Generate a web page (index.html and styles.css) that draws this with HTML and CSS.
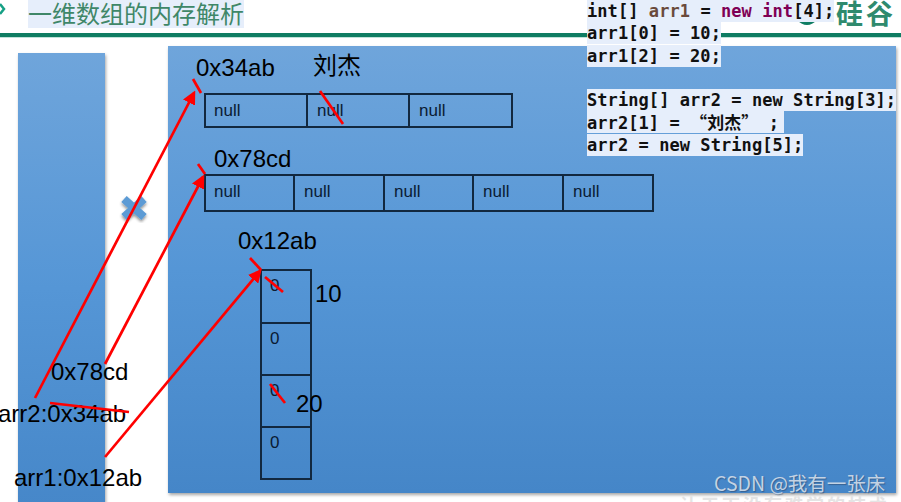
FILE: index.html
```html
<!DOCTYPE html>
<html lang="zh">
<head>
<meta charset="utf-8">
<title>一维数组的内存解析</title>
<link rel="stylesheet" href="styles.css">
</head>
<body>
<main class="slide">
  <header class="head">
    <svg class="bullet" width="8" height="16" viewBox="0 0 8 16"><path d="M0 3 L4 8 L0 13" fill="none" stroke="#16a085" stroke-width="2.5"/></svg>
    <h1 class="title">一维数组的内存解析</h1>
  </header>
  <div class="rule"></div>
  <div class="logo">硅谷</div>
  <svg class="smile" width="24" height="10" viewBox="0 0 24 10"><path d="M1 1 Q12 13 23 1 Q12 7 1 1Z" fill="#0f7d63"/></svg>

  <pre class="code"><span class="ln"><b>int[] <i class="v">arr1</i> = <i class="k">new</i> <i class="k">int</i>[4];</b></span>
<span class="ln">arr1[0] = 10;</span>
<span class="ln">arr1[2] = 20;</span>
<span class="ln blank"> </span>
<span class="ln">String[] arr2 = new String[3];</span>
<span class="ln pad">arr2[1] = <em class="zh">“刘杰”</em> ;</span>
<span class="ln">arr2 = new String[5];</span></pre>

  <div class="stack"></div>
  <div class="heap"></div>

  <div class="label lg at-a">0x34ab</div>
  <div class="label xl at-b">刘杰</div>
  <div class="arr arr3"><span>null</span><span>null</span><span>null</span></div>

  <div class="label lg at-c">0x78cd</div>
  <div class="arr arr5"><span>null</span><span>null</span><span>null</span><span>null</span><span>null</span></div>

  <div class="label lg at-d">0x12ab</div>
  <div class="col"><span>0</span><span>0</span><span>0</span><span>0</span></div>
  <div class="label lg at-e">10</div>
  <div class="label lg at-f">20</div>

  <div class="label lg at-g">0x78cd</div>
  <div class="label lg at-h">arr2:0x34ab</div>
  <div class="label lg at-i">arr1:0x12ab</div>

  <svg class="marks" width="901" height="502" viewBox="0 0 901 502">
    <defs>
      <marker id="tip" markerWidth="5" markerHeight="5" refX="4" refY="2.500" orient="auto"><path d="M0 0 L5 2.500 L0 5Z" fill="#f00"/></marker>
      <filter id="sh" x="-30%" y="-30%" width="160%" height="160%"><feDropShadow dx="0" dy="2" stdDeviation="1.500" flood-opacity=".45"/></filter>
    </defs>
    <g class="cross" filter="url(#sh)">
      <line x1="124" y1="199" x2="144" y2="217"/>
      <line x1="144" y1="199" x2="124" y2="217"/>
    </g>
    <g class="red">
      <line class="arrow" x1="35" y1="398" x2="194" y2="93" marker-end="url(#tip)"/>
      <line class="arrow" x1="105" y1="364" x2="203" y2="177" marker-end="url(#tip)"/>
      <line class="arrow" x1="105" y1="457" x2="260" y2="271" marker-end="url(#tip)"/>
      <line x1="193" y1="79" x2="201" y2="93"/>
      <line x1="320" y1="91" x2="343" y2="124"/>
      <line x1="198" y1="164" x2="205" y2="174"/>
      <line x1="250" y1="258" x2="261" y2="270"/>
      <line x1="265" y1="277" x2="283" y2="292"/>
      <line x1="270" y1="384" x2="285" y2="403"/>
      <line x1="50" y1="403" x2="129" y2="412"/>
    </g>
  </svg>

  <div class="wm">CSDN @我有一张床</div>
  <div class="under">让天下没有难学的技术</div>
</main>
</body>
</html>
```
FILE: styles.css
```css
html, body { margin: 0; padding: 0; background: #fff; }
body { width: 901px; height: 502px; overflow: hidden; }
.slide {
  position: relative;
  width: 901px;
  height: 502px;
  overflow: hidden;
  font-family: "Liberation Sans", "Noto Sans CJK SC", sans-serif;
  color: #000;
}
.head { display: flex; align-items: flex-start; height: 33px; }
.bullet { margin-top: 1px; flex: none; }
.title {
  margin: 0 0 0 20px;
  width: 216px;
  height: 28px;
  background: #e6eefb;
  color: #3f8768;
  font: 400 24px/26px "Noto Sans CJK SC", sans-serif;
  white-space: nowrap;
}
.rule {
  height: 4px;
  background: #0f7d63;
  border-bottom: 1px solid #bfe3d9;
}
.logo {
  position: absolute;
  left: 836px;
  top: -2px;
  color: #2f8a6d;
  font: 700 27px/30px "Noto Sans CJK SC", sans-serif;
  letter-spacing: 3px;
  white-space: nowrap;
}
.smile { position: absolute; left: 795px; top: 18px; }
.stack, .heap {
  position: absolute;
  background: linear-gradient(180deg, #6fa5db 0%, #5596d6 50%, #4586c8 100%);
  box-shadow: 1px 2px 3px rgba(0, 0, 0, .35);
}
.stack { left: 18px; top: 53px; width: 87px; height: 470px; }
.heap { left: 168px; top: 46px; width: 728px; height: 447px; }

.code {
  position: absolute;
  z-index: 3;
  left: 587px;
  top: 0;
  margin: 0;
  font: 700 17px/22.3px "DejaVu Sans Mono", "Liberation Mono", "Noto Sans CJK SC", monospace;
  letter-spacing: .07px;
  color: #111;
}
.ln { display: inline-block; background: #e6eefb; height: 22px; vertical-align: top; }
.ln b { font-weight: 700; }
.blank { background: none; }
.pad { padding-right: 5px; }
.v, .k { font-style: normal; }
.v { color: #6a4a3c; }
.k { color: #7f0055; }
.zh { font-style: normal; font-family: "Noto Sans CJK SC", sans-serif; }

.label { position: absolute; white-space: nowrap; line-height: 1; }
.lg { font-size: 24px; }
.xl { font: 400 24px/1 "Noto Sans CJK SC", sans-serif; }
.at-a { left: 196px; top: 56px; }
.at-b { left: 313px; top: 52px; }
.at-c { left: 214px; top: 147px; }
.at-d { left: 238px; top: 229px; }
.at-e { left: 315px; top: 282px; }
.at-f { left: 296px; top: 392px; }
.at-g { left: 51px; top: 360px; }
.at-h { left: -2px; top: 402px; }
.at-i { left: 14px; top: 466px; }

.arr, .col {
  position: absolute;
  display: grid;
  box-sizing: border-box;
  border: 2px solid #12283f;
  font-size: 17px;
  color: #0a1b33;
}
.arr span, .col span { display: block; box-sizing: border-box; }
.arr span { padding: 6px 0 0 9px; border-left: 2px solid #12283f; }
.arr span:first-child { padding-left: 8px; border-left: 0; }
.arr3 { left: 204px; top: 93px; width: 309px; height: 35px; grid-template-columns: 100px 102px 1fr; }
.arr5 { left: 204px; top: 174px; width: 450px; height: 38px; grid-template-columns: 87px 90px 89px 90px 1fr; }
.col { left: 260px; top: 269px; width: 52px; height: 211px; grid-template-rows: 51px 52px 52px 1fr; }
.col span { padding: 5px 0 0 8px; border-top: 2px solid #12283f; }
.col span:first-child { border-top: 0; }

.marks { position: absolute; left: 0; top: 0; z-index: 2; pointer-events: none; }
.cross line { stroke: #5b9bd5; stroke-width: 8; }
.red line { stroke: #f00; stroke-width: 2.7; }

.wm {
  position: absolute;
  left: 714px;
  top: 470px;
  z-index: 2;
  color: #c3d3e4;
  font: 400 19.5px/26px "Noto Sans CJK SC", sans-serif;
  text-shadow: 1px 1px 1px rgba(40, 60, 90, .5);
  white-space: nowrap;
}
.under {
  position: absolute;
  left: 680px;
  top: 494px;
  color: #e4e4e4;
  font: 700 18px/20px "Noto Sans CJK SC", sans-serif;
  letter-spacing: 3px;
  white-space: nowrap;
}
```
